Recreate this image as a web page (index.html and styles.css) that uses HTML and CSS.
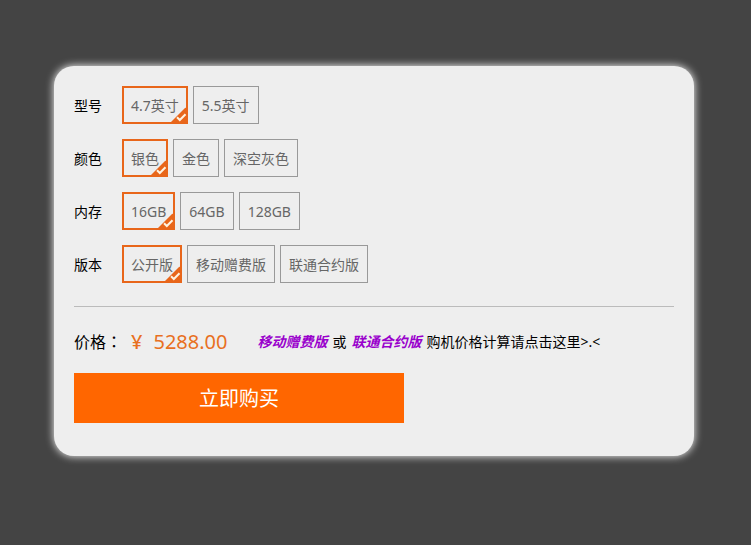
FILE: index.html
```html
<!DOCTYPE html>
<html lang="zh-CN">
<head>
<meta charset="utf-8">
<title>立即购买</title>
<link rel="stylesheet" href="styles.css">
</head>
<body>
<svg class="sprite" aria-hidden="true">
  <symbol id="tick" viewBox="0 0 18 17">
    <path class="tick-corner" d="M18 0V17H0V16L15 1Z"/>
    <path class="tick-mark" d="M7 10.2 L9.8 13 L15.5 7.2"/>
  </symbol>
</svg>
<form class="card">
  <fieldset class="row">
    <legend class="row-name">型号</legend>
    <div class="options">
      <label class="option"><input type="radio" name="model" checked>4.7英寸<svg class="tick"><use href="#tick"/></svg></label>
      <label class="option"><input type="radio" name="model">5.5英寸<svg class="tick"><use href="#tick"/></svg></label>
    </div>
  </fieldset>
  <fieldset class="row">
    <legend class="row-name">颜色</legend>
    <div class="options">
      <label class="option"><input type="radio" name="color" checked>银色<svg class="tick"><use href="#tick"/></svg></label>
      <label class="option"><input type="radio" name="color">金色<svg class="tick"><use href="#tick"/></svg></label>
      <label class="option"><input type="radio" name="color">深空灰色<svg class="tick"><use href="#tick"/></svg></label>
    </div>
  </fieldset>
  <fieldset class="row">
    <legend class="row-name">内存</legend>
    <div class="options">
      <label class="option"><input type="radio" name="memory" checked>16GB<svg class="tick"><use href="#tick"/></svg></label>
      <label class="option"><input type="radio" name="memory">64GB<svg class="tick"><use href="#tick"/></svg></label>
      <label class="option"><input type="radio" name="memory">128GB<svg class="tick"><use href="#tick"/></svg></label>
    </div>
  </fieldset>
  <fieldset class="row">
    <legend class="row-name">版本</legend>
    <div class="options">
      <label class="option"><input type="radio" name="edition" checked>公开版<svg class="tick"><use href="#tick"/></svg></label>
      <label class="option"><input type="radio" name="edition">移动赠费版<svg class="tick"><use href="#tick"/></svg></label>
      <label class="option"><input type="radio" name="edition">联通合约版<svg class="tick"><use href="#tick"/></svg></label>
    </div>
  </fieldset>
  <div class="summary">
    <span class="price-name">价格<span lang="zh-TW">：</span></span>
    <span class="price"><span class="yen">¥</span><span>5288.00</span></span>
    <span class="note"><em>移动赠费版</em><span>或</span><em>联通合约版</em><span>购机价格计算请点击这里&gt;.&lt;</span></span>
  </div>
  <button class="buy" type="button">立即购买</button>
</form>
</body>
</html>
```

FILE: styles.css
```css
* {
  box-sizing: border-box;
}

body {
  margin: 0;
  padding: 66px 57px 66px 54px;
  background: #444;
  color: #000;
  font: 14px/20px "Noto Sans", "Noto Sans CJK SC", sans-serif;
}

.sprite {
  position: absolute;
  width: 0;
  height: 0;
}

.card {
  max-width: 640px;
  padding: 20px 20px 33px;
  border-radius: 20px;
  background: #eee;
  box-shadow: 0 0 8px #fff;
}

.row {
  display: flex;
  align-items: center;
  min-width: 0;
  margin: 0 0 15px;
  padding: 0;
  border: 0;
}

.row-name {
  float: left;
  width: 48px;
  padding: 9px 0 7px;
  line-height: 22px;
}

.options {
  display: flex;
  flex-wrap: wrap;
  gap: 5px;
}

.option {
  position: relative;
  padding: 9px 8px 7px;
  border: 1px solid #999;
  color: #666;
  line-height: 20px;
  white-space: nowrap;
  cursor: pointer;
}

.option input {
  position: absolute;
  margin: 0;
  opacity: 0;
}

.option:has(input:checked) {
  padding: 8px 7px 6px;
  border: 2px solid #e8661a;
}

.tick {
  display: none;
  position: absolute;
  right: -2px;
  bottom: -2px;
  width: 18px;
  height: 17px;
}

.option:has(input:checked) .tick {
  display: block;
}

.tick-corner {
  fill: #e8661a;
}

.tick-mark {
  fill: none;
  stroke: #fff3e0;
  stroke-width: 2;
}

.summary {
  display: flex;
  align-items: center;
  flex-wrap: wrap;
  margin: 23px 0 16px;
  padding-top: 20px;
  border-top: 1px solid #bbb;
  line-height: 30px;
}

.price-name {
  width: 57px;
  font-size: 16px;
}

.price-name [lang] {
  font-family: "Noto Sans", "Noto Sans CJK TC", sans-serif;
}

.price {
  display: flex;
  gap: 11px;
  margin-right: 30px;
  color: #e8701f;
  font-size: 20px;
}

.yen {
  font-weight: 500;
}

.note {
  display: flex;
  gap: 5px;
}

.note em {
  color: #90c;
  font-weight: bold;
}

.buy {
  display: block;
  width: 55%;
  height: 50px;
  padding: 2px 0 0;
  border: 0;
  background: #f60;
  color: #fff;
  font: inherit;
  font-size: 20px;
  cursor: pointer;
}
```
